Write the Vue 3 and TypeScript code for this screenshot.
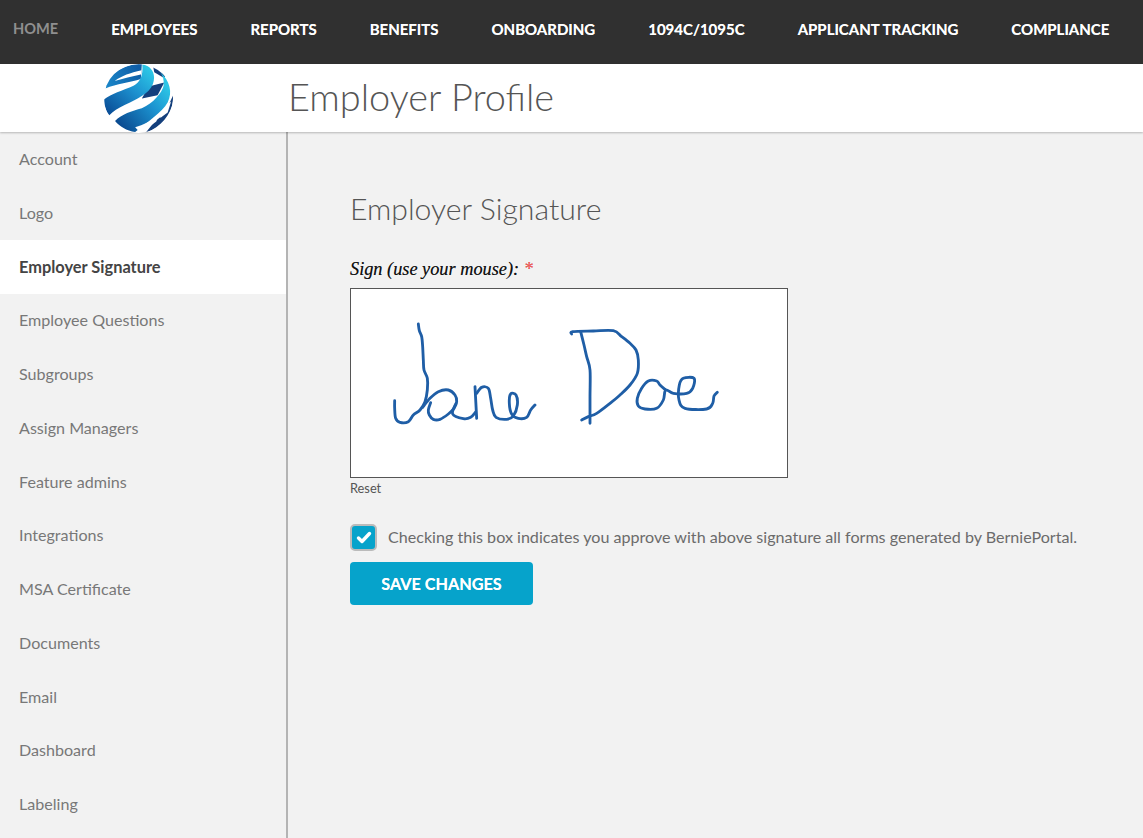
<script setup lang="ts">
const navItems: string[] = ['HOME', 'EMPLOYEES', 'REPORTS', 'BENEFITS', 'ONBOARDING', '1094C/1095C', 'APPLICANT TRACKING', 'COMPLIANCE']
const sideItems: string[] = ['Account', 'Logo', 'Employer Signature', 'Employee Questions', 'Subgroups', 'Assign Managers', 'Feature admins', 'Integrations', 'MSA Certificate', 'Documents', 'Email', 'Dashboard', 'Labeling']

type Pt = [number, number]

// Smooth a hand-drawn stroke through its sampled points (Catmull-Rom to Bezier).
function smooth(pts: Pt[]): string {
  let d = `M${pts[0][0]} ${pts[0][1]}`
  for (let i = 0; i < pts.length - 1; i++) {
    const p0 = pts[Math.max(i - 1, 0)]
    const p1 = pts[i]
    const p2 = pts[i + 1]
    const p3 = pts[Math.min(i + 2, pts.length - 1)]
    const c1x = p1[0] + (p2[0] - p0[0]) / 6
    const c1y = p1[1] + (p2[1] - p0[1]) / 6
    const c2x = p2[0] - (p3[0] - p1[0]) / 6
    const c2y = p2[1] - (p3[1] - p1[1]) / 6
    d += `C${c1x.toFixed(1)} ${c1y.toFixed(1)} ${c2x.toFixed(1)} ${c2y.toFixed(1)} ${p2[0]} ${p2[1]}`
  }
  return d
}

const janeStrokes: string[] = ([
  [[115, 42], [118, 62], [125, 80], [128, 110], [130, 150], [132, 180], [142, 205], [142, 240], [135, 275], [120, 300], [100, 315], [85, 335], [60, 337], [47, 325], [44, 295], [44, 272]],
  [[128, 292], [150, 265], [175, 245], [205, 240], [225, 255], [230, 275], [222, 295], [205, 312], [180, 328], [160, 328], [148, 315], [145, 300], [152, 278]],
  [[228, 280], [218, 312], [250, 326], [272, 322], [287, 306]],
  [[285, 230], [290, 325]],
  [[290, 250], [305, 232], [325, 235], [332, 265], [338, 300], [348, 322], [380, 328], [400, 318], [412, 285], [408, 255], [392, 252], [388, 280], [395, 312], [415, 325], [440, 322], [452, 300], [465, 285]],
] as Pt[][]).map(smooth)

const doeStrokes: string[] = ([
  [[35, 72], [38, 65], [100, 63], [160, 62], [185, 80], [210, 100], [228, 120], [235, 150], [232, 190], [210, 225], [180, 255], [150, 280], [110, 310], [85, 320], [65, 330]],
  [[62, 65], [72, 105], [80, 140], [90, 180], [90, 260], [90, 340]],
  [[317, 240], [300, 225], [290, 213], [265, 213], [245, 235], [232, 265], [235, 288], [255, 297], [290, 295], [310, 270], [317, 240], [340, 250], [380, 250], [398, 235], [402, 205], [370, 205], [358, 225], [357, 270], [375, 295], [440, 297], [458, 280], [462, 258], [472, 247]],
] as Pt[][]).map(smooth)
</script>

<template>
  <div class="page">
    <nav class="topnav">
      <a v-for="(item, i) in navItems" :key="item" class="navlink" :class="{ muted: i === 0 }">{{ item }}</a>
    </nav>
    <header class="titlebar">
      <div class="logo-cell">
        <svg class="logo" width="69" height="69" viewBox="72 25 206 206">
          <defs>
            <clipPath id="globe"><circle cx="175" cy="128" r="103" /></clipPath>
            <linearGradient id="bandOne" gradientUnits="userSpaceOnUse" x1="205" y1="40" x2="85" y2="170">
              <stop offset="0" stop-color="#2cc6e6" />
              <stop offset=".45" stop-color="#1c8fce" />
              <stop offset="1" stop-color="#0a4f98" />
            </linearGradient>
            <linearGradient id="bandTwo" gradientUnits="userSpaceOnUse" x1="260" y1="90" x2="120" y2="210">
              <stop offset="0" stop-color="#2cc6e6" />
              <stop offset=".4" stop-color="#1c93d0" />
              <stop offset="1" stop-color="#0a4a90" />
            </linearGradient>
            <linearGradient id="topPiece" gradientUnits="userSpaceOnUse" x1="80" y1="95" x2="180" y2="50">
              <stop offset="0" stop-color="#1a86c8" />
              <stop offset="1" stop-color="#0f5ea8" />
            </linearGradient>
          </defs>
          <g clip-path="url(#globe)">
            <rect x="72" y="25" width="206" height="206" fill="#fff" />
            <path d="M76 98C80 65 120 25 185 25L182 70C150 80 110 84 76 98Z" fill="url(#topPiece)" />
            <path d="M104 76C125 60 150 52 184 44L182 56C155 62 130 68 104 76Z" fill="#fff" />
            <path d="M218 28L262 55L250 66L222 50Z" fill="#143f7c" />
            <path d="M205 92L252 80L232 118L185 128Z" fill="#143f7c" />
            <path d="M280 115C280 165 250 210 195 232L222 198L250 176L264 150Z" fill="#143f7c" />
            <path d="M244 158L272 138L262 170L240 186Z" fill="#fff" />
            <path d="M186 26C216 32 228 55 218 85C208 113 170 130 135 147C115 156 98 168 88 178C78 165 70 145 73 130C90 116 130 103 160 90C180 80 190 58 186 26Z" fill="url(#bandOne)" />
            <path d="M240 50C268 75 278 110 262 140C245 170 205 195 165 228C140 225 118 210 105 195C125 175 155 165 185 157C220 142 245 110 250 90C252 75 248 60 240 50Z" fill="url(#bandTwo)" />
            <path d="M165 214C190 206 210 198 234 182L228 197C210 212 190 221 176 226Z" fill="#fff" />
          </g>
        </svg>
      </div>
      <h1 class="page-title">Employer Profile</h1>
    </header>
    <div class="body-row">
      <aside class="sidebar">
        <a v-for="item in sideItems" :key="item" class="sidelink" :class="{ active: item === 'Employer Signature' }">{{ item }}</a>
      </aside>
      <main class="content">
        <h2 class="section-title">Employer Signature</h2>
        <label class="sign-label">Sign (use your mouse): <span class="req">*</span></label>
        <div class="sign-box">
          <svg class="sign-svg" width="436" height="188" viewBox="351 289 436 188" fill="none" stroke="#1f5ea6" stroke-width="8.5" stroke-linejoin="round" stroke-linecap="round">
            <g transform="translate(380 310) scale(.33333)">
              <path v-for="d in janeStrokes" :key="d" :d="d" />
            </g>
            <g transform="translate(560 310) scale(.33333)">
              <path v-for="d in doeStrokes" :key="d" :d="d" />
            </g>
          </svg>
        </div>
        <a class="reset">Reset</a>
        <div class="approve">
          <span class="check">
            <svg width="16" height="13" viewBox="0 0 16 13" fill="none" stroke="#fff" stroke-width="3.4" stroke-linecap="round" stroke-linejoin="round"><path d="M2.5 7l3.5 3.5 7.5-8" /></svg>
          </span>
          <span class="approve-text">Checking this box indicates you approve with above signature all forms generated by BerniePortal.</span>
        </div>
        <button class="save" type="button">SAVE CHANGES</button>
      </main>
    </div>
  </div>
</template>

<style>
html, body { margin: 0; background: #f2f2f2; }
</style>

<style scoped>
.page {
  height: 838px;
  overflow: hidden;
  display: flex;
  flex-direction: column;
  font-family: Lato, "Liberation Sans", sans-serif;
  background: #f2f2f2;
}
.topnav {
  height: 64px;
  flex: none;
  background: #303030;
  display: flex;
  align-items: center;
  gap: 53px;
  padding: 0 0 7px 13px;
  box-sizing: border-box;
}
.navlink {
  color: #fff;
  font-size: 15px;
  font-weight: 700;
  white-space: nowrap;
  text-shadow: 0 0 .6px rgba(255, 255, 255, .7);
}
.navlink.muted { color: #8f8f8f; font-size: 14.6px; text-shadow: none; }
.titlebar {
  height: 68px;
  flex: none;
  background: #fff;
  display: flex;
  align-items: center;
  box-shadow: 0 1px 2px rgba(0, 0, 0, .25);
  position: relative;
  z-index: 1;
}
.logo-cell {
  width: 288px;
  flex: none;
  display: flex;
  padding-left: 104px;
  box-sizing: border-box;
}
.logo { display: block; }
.page-title {
  margin: 0 0 4px;
  font-size: 37.9px;
  font-weight: 300;
  color: #555;
  white-space: nowrap;
}
.body-row { flex: 1; display: flex; min-height: 0; }
.sidebar {
  width: 288px;
  flex: none;
  box-sizing: border-box;
  border-right: 2px solid #b4b4b4;
  display: flex;
  flex-direction: column;
  padding-top: .4px;
}
.sidelink {
  height: 53.75px;
  flex: none;
  display: flex;
  align-items: center;
  box-sizing: border-box;
  padding: 0 0 1.4px 19px;
  font-size: 16.1px;
  color: #787878;
}
.sidelink.active {
  background: #fff;
  color: #444;
  font-size: 16.4px;
  font-weight: 700;
}
.content {
  flex: 1;
  padding: 55px 0 0 62px;
  box-sizing: border-box;
  display: flex;
  flex-direction: column;
  align-items: flex-start;
}
.section-title {
  margin: 0;
  font-size: 30.2px;
  line-height: 42px;
  font-weight: 300;
  color: #555;
}
.sign-label {
  margin-top: 30px;
  font-family: "Liberation Serif", serif;
  font-style: italic;
  font-size: 18.3px;
  line-height: 20px;
  color: #111;
  text-shadow: 0 0 .5px rgba(0, 0, 0, .5);
}
.req { color: #f55; }
.sign-box {
  margin-top: 9px;
  width: 438px;
  height: 190px;
  box-sizing: border-box;
  border: 1px solid #555;
  background: #fff;
}
.sign-svg { display: block; }
.reset {
  margin-top: 2px;
  font-size: 12.8px;
  line-height: 16px;
  color: #555;
}
.approve {
  margin-top: 28px;
  display: flex;
  align-items: center;
  gap: 11px;
}
.check {
  width: 27px;
  height: 27px;
  box-sizing: border-box;
  border: 2px solid #bbb;
  border-radius: 5px;
  background: #06a3cb;
  display: flex;
  align-items: center;
  justify-content: center;
}
.approve-text {
  font-size: 16.1px;
  color: #6b6b6b;
  white-space: nowrap;
  padding-bottom: 2px;
}
.save {
  margin-top: 11px;
  width: 183px;
  height: 43px;
  border: 0;
  border-radius: 4px;
  background: #06a3cb;
  color: #fff;
  font-family: Lato, "Liberation Sans", sans-serif;
  font-size: 16.2px;
  font-weight: 700;
  text-shadow: 0 0 .6px rgba(255, 255, 255, .8);
}
</style>
